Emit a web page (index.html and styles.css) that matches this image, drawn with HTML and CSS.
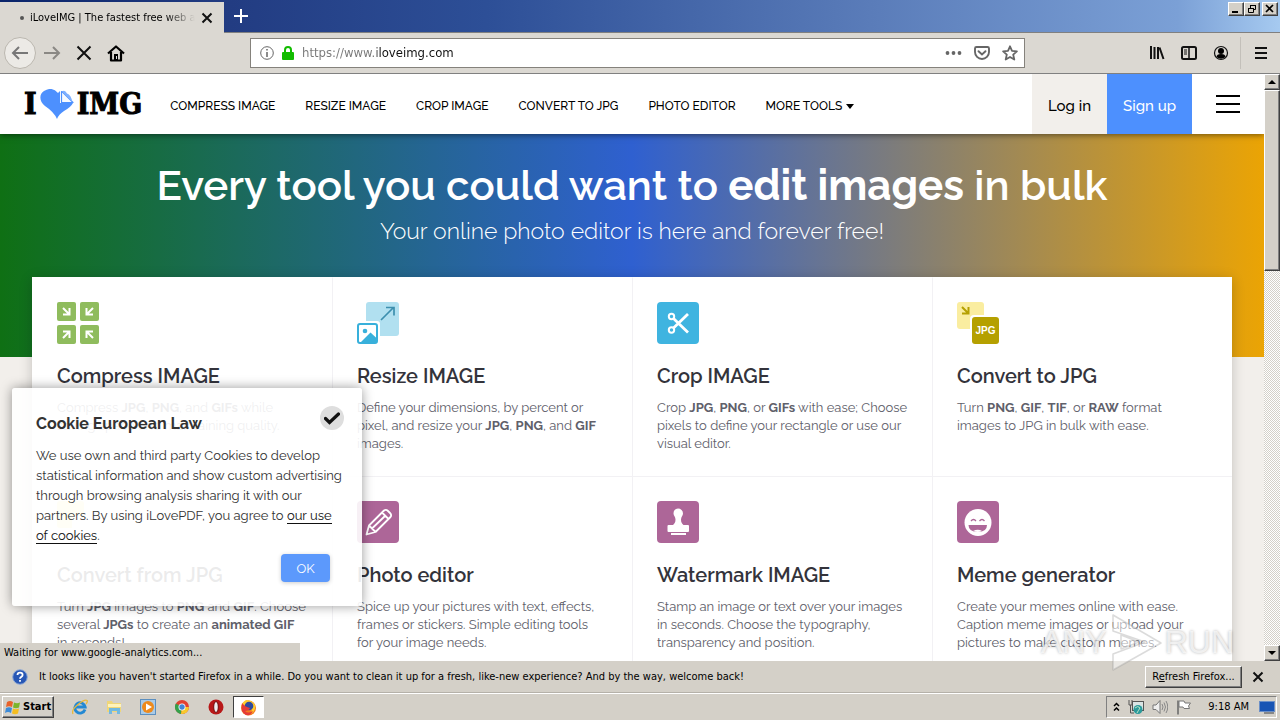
FILE: index.html
```html
<!DOCTYPE html>
<html lang="en">
<head>
<meta charset="utf-8">
<title>iLoveIMG | The fastest free web app</title>
<link rel="stylesheet" href="styles.css">
</head>
<body>
<div class="tabbar">
  <div class="tab"><span class="tab-dot"></span><span class="tab-title">iLoveIMG | The fastest free web app</span>
    <button class="icon-btn tab-close" aria-label="Close tab"><svg width="12" height="12" viewBox="0 0 12 12"><path d="M1.500 1.500l9 9M10.500 1.500l-9 9" stroke="#111" stroke-width="2"/></svg></button>
  </div>
  <button class="icon-btn new-tab" aria-label="New tab"><svg width="16" height="16" viewBox="0 0 16 16"><path d="M8 1v14M1 8h14" stroke="#fff" stroke-width="2"/></svg></button>
  <div class="window-buttons">
    <button class="win" aria-label="Minimize"><svg width="12" height="10" viewBox="0 0 12 10"><path d="M2 8h6" stroke="#000" stroke-width="2"/></svg></button>
    <button class="win" aria-label="Restore"><svg width="12" height="10" viewBox="0 0 12 10"><path d="M4.500 4V1.500h5v4H8M4 1.500h6M2.500 4.500h5v4h-5zM2 4.500h6" fill="none" stroke="#000"/></svg></button>
    <button class="win win-close" aria-label="Close"><svg width="12" height="10" viewBox="0 0 12 10"><path d="M2 1l7 7M9 1L2 8" stroke="#000" stroke-width="1.700"/></svg></button>
  </div>
</div>
<div class="toolbar">
  <button class="icon-btn back" aria-label="Back"><svg width="18" height="16" viewBox="0 0 18 16"><path d="M17 8H2M8 2L2 8l6 6" fill="none" stroke="#777" stroke-width="2"/></svg></button>
  <button class="icon-btn nav-btn" aria-label="Forward"><svg width="18" height="16" viewBox="0 0 18 16"><path d="M1 8h15M10 2l6 6-6 6" fill="none" stroke="#8a8884" stroke-width="2"/></svg></button>
  <button class="icon-btn nav-btn" aria-label="Stop"><svg width="16" height="16" viewBox="0 0 16 16"><path d="M1.500 1.500l13 13M14.500 1.500l-13 13" stroke="#111" stroke-width="2"/></svg></button>
  <button class="icon-btn nav-btn" aria-label="Home"><svg width="18" height="17" viewBox="0 0 18 17"><path d="M1 8.500L9 1.500l8 7M4 7v8.500h10V7" fill="none" stroke="#000" stroke-width="2.200" stroke-linejoin="round"/><path d="M7 9h4v7H7z"/><path d="M9.500 11v3" stroke="#ddd"/></svg></button>
  <div class="urlbar">
    <svg width="14" height="14" viewBox="0 0 14 14"><circle cx="7" cy="7" r="6.300" fill="none" stroke="#666"/><path d="M7 6v5M7 3v1.600" stroke="#666" stroke-width="1.500"/></svg>
    <svg width="12" height="14" viewBox="0 0 12 14"><path d="M3 7V4a3 3 0 0 1 6 0v3" fill="none" stroke="#12bc00" stroke-width="2"/><rect y="6" width="12" height="8" rx="1" fill="#12bc00"/></svg>
    <input class="url" type="text" value="https://www.iloveimg.com" aria-label="Address">
    <svg width="17" height="16" viewBox="0 0 17 16" fill="#666"><circle cx="2.500" cy="8" r="1.900"/><circle cx="8.500" cy="8" r="1.900"/><circle cx="14.500" cy="8" r="1.900"/></svg>
    <svg width="16" height="16" viewBox="0 0 16 16"><path d="M2.500 2h11q1.500 0 1.500 1.500V7a7 7 0 0 1-14 0V3.500Q1 2 2.500 2zM4.500 6.200L8 9.500l3.500-3.300" fill="none" stroke="#666" stroke-width="1.900" stroke-linecap="round"/></svg>
    <svg width="16" height="16" viewBox="0 0 16 16"><path d="M8 1.300l2 4.500 4.900.5-3.700 3.300 1.100 4.900L8 12l-4.300 2.500 1.100-4.900L1.100 6.300 6 5.800z" fill="none" stroke="#666" stroke-width="1.800" stroke-linejoin="round"/></svg>
  </div>
  <div class="tools-right">
    <svg width="16" height="16" viewBox="0 0 16 16"><path d="M2 1v13M5.500 2v12M9 2v12M10.500 2.500l4 11.500" stroke="#111" stroke-width="2"/></svg>
    <svg width="16" height="16" viewBox="0 0 16 16"><rect x="1" y="2" width="14" height="12" rx="1.500" fill="none" stroke="#111" stroke-width="2"/><path d="M8 2v12" stroke="#111" stroke-width="1.500"/><path d="M3 5h3M3 7h3M3 9h3" stroke="#111"/></svg>
    <svg width="16" height="16" viewBox="0 0 16 16"><circle cx="8" cy="8" r="6.500" fill="none" stroke="#111" stroke-width="1.200"/><circle cx="8" cy="6" r="3"/><path d="M3.500 12q0-3 4.500-3t4.500 3Q8 15.500 3.500 12z"/></svg>
    <button class="icon-btn app-menu" aria-label="Open menu"><svg width="12" height="12" viewBox="0 0 12 12"><path d="M0 1h12M0 6h12M0 11h12" stroke="#111" stroke-width="2"/></svg></button>
  </div>
</div>

<div class="viewport">
  <div class="page">
    <header class="header">
      <a class="logo" href="#" aria-label="I love IMG"><span>I</span>
        <svg width="34" height="31" viewBox="0 0 34 31"><path d="M17 30Q14 23 5 17C-1 12-1 5 4 2Q12-3 18 4L20 2l0 12 13 0Q31 18 24 22q-5 3-7 8z" fill="#4d90fe"/><path d="M21.500 2.500V13.500h11.500L22 2.500z" fill="#f7faff" stroke="#4d90fe" stroke-width="1.200" stroke-linejoin="round"/><path d="M22 2.500q3-2 5 2 4 1 5.500 9z" fill="#7fb0ff"/></svg>
        <span>IMG</span></a>
      <nav class="nav">
        <a href="#">COMPRESS IMAGE</a><a href="#">RESIZE IMAGE</a><a href="#">CROP IMAGE</a><a href="#">CONVERT TO JPG</a><a href="#">PHOTO EDITOR</a>
        <a class="more" href="#">MORE TOOLS<svg width="8" height="5" viewBox="0 0 8 5"><path d="M0 0h8L4 5z"/></svg></a>
      </nav>
      <a class="login" href="#">Log in</a>
      <a class="signup" href="#">Sign up</a>
      <button class="icon-btn burger" aria-label="Menu"><svg width="24" height="18" viewBox="0 0 24 18"><path d="M0 1h24M0 9h24M0 17h24" stroke="#000" stroke-width="2"/></svg></button>
    </header>
    <section class="hero">
      <h1>Every tool you could want to <b>edit images</b> in bulk</h1>
      <h2>Your online photo editor is here and forever free!</h2>
    </section>
    <main class="grid">
      <a class="card" href="#">
        <svg width="42" height="42" viewBox="0 0 42 42"><g fill="#8fbc5d"><rect width="19" height="19" rx="2"/><rect x="23" width="19" height="19" rx="2"/><rect y="23" width="19" height="19" rx="2"/><rect x="23" y="23" width="19" height="19" rx="2"/></g><path d="M6 6l6 6M12.500 6v6.500H6M36 6l-6 6M29.500 6v6.500H36M6 36l6-6M6 29.500h6.500V36M36 36l-6-6M36 29.500h-6.500V36" fill="none" stroke="#fff" stroke-width="2"/></svg>
        <h3>Compress IMAGE</h3><p>Compress <b>JPG</b>, <b>PNG</b>, and <b>GIFs</b> while<br>saving space and maintaining quality.</p></a>
      <a class="card" href="#">
        <svg width="42" height="42" viewBox="0 0 42 42"><rect x="9" width="33" height="34" rx="3" fill="#b1e0f0"/><path d="M24 18L36 6M29 5.500h8v8" fill="none" stroke="#3d8fae" stroke-width="1.700"/><rect x="-2" y="19" width="25" height="25" rx="3" fill="#fff"/><rect x="1" y="22" width="19" height="19" rx="2" fill="#fff" stroke="#38b0db" stroke-width="2"/><circle cx="8" cy="29" r="2.300" fill="#38b0db"/><path d="M3 41l10.500-10.500L20 36.500V41z" fill="#38b0db"/></svg>
        <h3>Resize IMAGE</h3><p>Define your dimensions, by percent or<br>pixel, and resize your <b>JPG</b>, <b>PNG</b>, and <b>GIF</b><br>images.</p></a>
      <a class="card" href="#">
        <svg width="42" height="42" viewBox="0 0 42 42"><rect width="42" height="42" rx="4" fill="#3fb4e0"/><g fill="none" stroke="#fff"><circle cx="14.500" cy="14.500" r="2.700" stroke-width="2"/><circle cx="14.500" cy="28" r="2.700" stroke-width="2"/><path d="M16.500 16.500L31 30.500M16.500 26L31 12" stroke-width="2.800"/></g></svg>
        <h3>Crop IMAGE</h3><p>Crop <b>JPG</b>, <b>PNG</b>, or <b>GIFs</b> with ease; Choose<br>pixels to define your rectangle or use our<br>visual editor.</p></a>
      <a class="card" href="#">
        <svg width="42" height="42" viewBox="0 0 42 42"><rect width="27" height="27" rx="3" fill="#faeda0"/><path d="M5 5l6 6M11.500 5v6.500H5" fill="none" stroke="#b5a000" stroke-width="2"/><rect x="13" y="13" width="31" height="31" rx="4" fill="#fff"/><rect x="15" y="15" width="27" height="27" rx="3" fill="#b5a000"/><text x="28.500" y="32" class="jpg">JPG</text></svg>
        <h3>Convert to JPG</h3><p>Turn <b>PNG</b>, <b>GIF</b>, <b>TIF</b>, or <b>RAW</b> format<br>images to JPG in bulk with ease.</p></a>
      <a class="card" href="#">
        <svg width="42" height="42" viewBox="0 0 42 42"><rect width="27" height="27" rx="3" fill="#faeda0"/><rect x="15" y="15" width="27" height="27" rx="3" fill="#fff"/></svg>
        <h3>Convert from JPG</h3><p>Turn <b>JPG</b> images to <b>PNG</b> and <b>GIF</b>. Choose<br>several <b>JPGs</b> to create an <b>animated GIF</b><br>in seconds!</p></a>
      <a class="card" href="#">
        <svg width="42" height="42" viewBox="0 0 42 42"><rect width="42" height="42" rx="4" fill="#ad6698"/><path d="M9.500 33.500l2.500-9L27 9.500q2-1.500 4 .5l2 2q2 2 .5 4L18.500 31zM12 24.500l6.500 6.500M25 11.500l6.500 6.500M15 27.500L28.500 14.500" fill="none" stroke="#fff" stroke-width="1.800" stroke-linejoin="round"/></svg>
        <h3>Photo editor</h3><p>Spice up your pictures with text, effects,<br>frames or stickers. Simple editing tools<br>for your image needs.</p></a>
      <a class="card" href="#">
        <svg width="42" height="42" viewBox="0 0 42 42"><rect width="42" height="42" rx="4" fill="#ad6698"/><path d="M21 7.500a5 5 0 0 1 5 5c0 2-2 3.500-2 6 0 3 1 4 2.500 5.500H31q1 0 1 1v5q0 1-1 1H11.500q-1 0-1-1v-5q0-1 1-1h4.500C17.500 22.500 18.500 21.500 18.500 18.500c0-2.500-2-4-2-6a5 5 0 0 1 4.500-5zM14 32h15v2H14z" fill="#fff"/></svg>
        <h3>Watermark IMAGE</h3><p>Stamp an image or text over your images<br>in seconds. Choose the typography,<br>transparency and position.</p></a>
      <a class="card" href="#">
        <svg width="42" height="42" viewBox="0 0 42 42"><rect width="42" height="42" rx="4" fill="#ad6698"/><circle cx="21" cy="21.500" r="13.500" fill="#fff"/><path d="M14 20q2.500-3 5 0M22.500 20q2.500-3 5 0" fill="none" stroke="#ad6698" stroke-width="1.300"/><path d="M11.500 24h18.500q0 7-9.200 7t-9.300-7z" fill="#ad6698"/><path d="M16 30q5-2.500 9 0-4 1.800-9 0z" fill="#fff"/></svg>
        <h3>Meme generator</h3><p>Create your memes online with ease.<br>Caption meme images or upload your<br>pictures to make custom memes.</p></a>
    </main>
  </div>
  <div class="scrollbar"><button class="sb-btn" aria-label="Scroll up"><svg width="8" height="4" viewBox="0 0 8 4"><path d="M0 4h8L4 0z"/></svg></button><div class="thumb"></div><button class="sb-btn sb-down" aria-label="Scroll down"><svg width="8" height="4" viewBox="0 0 8 4"><path d="M0 0h8L4 4z"/></svg></button></div>
  <aside class="cookie">
    <div class="cookie-head"><strong>Cookie European Law</strong><button class="icon-btn cookie-check" aria-label="Accept"><svg width="16" height="13" viewBox="0 0 16 13"><path d="M1.500 6.500l4 4L14.500 2" fill="none" stroke="#111" stroke-width="3.200" stroke-linecap="round"/></svg></button></div>
    <p>We use own and third party Cookies to develop<br>statistical information and show custom advertising<br>through browsing analysis sharing it with our<br>partners. By using iLovePDF, you agree to <a href="#">our use<br>of cookies</a>.</p>
    <button class="ok">OK</button>
  </aside>
  <div class="status">Waiting for www.google-analytics.com...</div>
  <div class="watermark"><span>ANY</span><svg width="58" height="62" viewBox="0 0 58 62"><path d="M6 4v16l32 11-32 12v16l48-27zM14 24v14l18-7z" fill="#fff" fill-opacity=".5" stroke="#999" stroke-opacity=".35" stroke-width="1.500" stroke-linejoin="round"/></svg><span>RUN</span></div>
</div>

<div class="notice">
  <svg width="16" height="16" viewBox="0 0 16 16"><circle cx="8" cy="8" r="7.300" fill="#2857b5" stroke="#8ea9d6"/><path d="M5.500 6q0-2.300 2.600-2.300T10.600 6q0 1.200-1.300 1.900T8 9.700M8 11v1.800" fill="none" stroke="#fff" stroke-width="1.800"/></svg>
  <span class="notice-text">It looks like you haven't started Firefox in a while. Do you want to clean it up for a fresh, like-new experience? And by the way, welcome back!</span>
  <button class="refresh">R<u>e</u>fresh Firefox...</button>
  <button class="icon-btn" aria-label="Dismiss"><svg width="12" height="12" viewBox="0 0 12 12"><path d="M1.500 1.500l9 9M10.500 1.500l-9 9" stroke="#111" stroke-width="2"/></svg></button>
</div>
<div class="taskbar">
  <button class="start"><svg width="16" height="15" viewBox="0 0 16 15"><path d="M2 2q3-2 6 0L7 7Q4 5.500 1 7z" fill="#e8622a"/><path d="M9 2.500q3 1.500 6 0L14 7.500q-3 1.500-6 0z" fill="#7bb52c"/><path d="M1 8q3-1.500 6 0l-1 5q-3-2-6 0z" fill="#3c8bd8"/><path d="M8 8.500q3 1.500 6 0L13 13.500q-3 1.500-6 0z" fill="#f4bd20"/></svg>Start</button>
  <div class="launch">
    <svg width="16" height="16" viewBox="0 0 16 16"><path d="M13 10.500A5.200 5.200 0 1 1 13.200 8H3.500" fill="none" stroke="#2489d3" stroke-width="2.800"/><path d="M1 15Q-1 11 6 5.500T15 1.500q1 1-1 3.500" fill="none" stroke="#e9b93a" stroke-width="1.300"/></svg>
    <svg width="16" height="16" viewBox="0 0 16 16"><path d="M1 2h5l1 2h8v9H1z" fill="#efd679"/><path d="M2 5h13v3H2z" fill="#fff3ba"/><path d="M3 15V9h11v6h-3v-3H6v3z" fill="#72b9e0"/></svg>
    <svg width="16" height="16" viewBox="0 0 16 16"><rect x=".5" y=".5" width="15" height="15" fill="#aacbe7" stroke="#5c8fbf"/><circle cx="8" cy="8" r="6" fill="#ee8a1c"/><path d="M6 4.500v7L12 8z" fill="#fff"/></svg>
    <svg width="16" height="16" viewBox="0 0 16 16"><circle cx="8" cy="8" r="7" fill="#e24132"/><path d="M8 8L1.900 4.500A7 7 0 0 0 7 15z" fill="#34a14b"/><path d="M8 8h7A7 7 0 0 1 7 15z" fill="#f8c92c"/><circle cx="8" cy="8" r="3.500" fill="#fff"/><circle cx="8" cy="8" r="2.700" fill="#4285d8"/></svg>
    <svg width="16" height="16" viewBox="0 0 16 16"><ellipse cx="8" cy="8" rx="7.500" ry="7.500" fill="#b81818"/><ellipse cx="8" cy="8" rx="2.300" ry="5.500" fill="#eee" stroke="#6f0808"/></svg>
  </div>
  <button class="running" aria-label="Firefox"><svg width="17" height="17" viewBox="0 0 17 17"><circle cx="8.500" cy="9" r="7.500" fill="#f47a1e"/><path d="M1 8q1-5 5-7 6 0 9 5 1 6-4 9 2-5-1-8z" fill="#ffcc2c"/><circle cx="9" cy="7" r="4.300" fill="#304b9d"/><path d="M2 4q3 4 8 5-1 3-5 3 3 3 8 0-2 5-7 4Q0 13 2 4z" fill="#e43b37"/></svg></button>
  <div class="tray">
    <svg width="7" height="10" viewBox="0 0 7 10"><path d="M1 4l2.500-2.500L6 4M1 8.500L3.500 6 6 8.500" fill="none" stroke="#000" stroke-width="1.500"/></svg>
    <svg width="16" height="16" viewBox="0 0 16 16"><rect x="4.500" y="2.500" width="11" height="9" fill="#d9e4e4" stroke="#555"/><path d="M1 1v5h3V1M2.500 6v8H6" fill="none" stroke="#555"/><circle cx="10" cy="10.500" r="4.500" fill="#2b9a9b"/><path d="M7 9q3-3 5 0-2 3-3 5" fill="none" stroke="#b9e6c8"/></svg>
    <svg width="16" height="16" viewBox="0 0 16 16"><path d="M1 6h3l4-4.500v13L4 10.500H1z" fill="#eee" stroke="#777"/><path d="M10 5q2 3 0 6M12 3.500q3 4.500 0 9M14 2q3.500 6 0 12" fill="none" stroke="#888"/></svg>
    <svg width="16" height="16" viewBox="0 0 16 16"><path d="M2 1.500v14" stroke="#666" stroke-width="1.500"/><path d="M3 2h5l1 2h5.500l-2 3 1 2.500H8L7 8H3z" fill="#fff" stroke="#777"/></svg>
    <time>9:18 AM</time>
    <svg width="16" height="13" viewBox="0 0 16 13"><rect x=".5" y=".5" width="15" height="10" fill="#1854b4" stroke="#6b8fc7"/><path d="M5 12h10" stroke="#888" stroke-width="2"/></svg>
  </div>
</div>
</body>
</html>
```

FILE: styles.css
```css
* { box-sizing: border-box; }
body { margin: 0; height: 100vh; display: flex; flex-direction: column; overflow: hidden; background: #d4d0c8; color: #000; font: 11px/14px Tahoma, "DejaVu Sans Condensed", sans-serif; }
a { color: inherit; text-decoration: none; }
button { font: inherit; color: inherit; }
svg { display: block; flex: none; }
h1, h2, h3, p { margin: 0; }
.icon-btn { display: flex; align-items: center; justify-content: center; padding: 0; border: 0; background: none; }

.tabbar { display: flex; flex: none; height: 33px; background: linear-gradient(90deg, #0a246a, #223c82 18%, #2d4f97 38%, #5a7cb9 68%, #7ba0d6 92%, #a6caf0); border-bottom: 1px solid #808080; }
.tab { display: flex; align-items: center; width: 224px; height: 31px; margin-top: 2px; padding: 0 11px 0 20px; background: #dbd8d2; }
.tab-dot { width: 4px; height: 4px; margin-right: 6px; border-radius: 50%; background: #555; }
.tab-title { flex: 1; overflow: hidden; white-space: nowrap; mask-image: linear-gradient(90deg, #000 82%, transparent); }
.tab-close { margin-left: 6px; }
.new-tab { width: 34px; }
.window-buttons { display: flex; margin-left: auto; padding: 2px 2px 0 0; }
.win { display: grid; place-items: center; width: 16px; height: 14px; padding: 0; }
.win-close { margin-left: 2px; }
.win, .sb-btn, .thumb, .refresh, .start { background: #d4d0c8; border: 1px solid; border-color: #fff #404040 #404040 #fff; box-shadow: inset -1px -1px #808080; }

.toolbar { display: flex; align-items: center; flex: none; height: 41px; padding: 0 13px 0 4px; background: #dbd8d2; border-bottom: 1px solid #808080; }
.back { width: 32px; height: 32px; border: 1px solid #bbb7af; border-radius: 50%; background: #eceae6; }
.nav-btn { width: 32px; height: 32px; }
.urlbar { display: flex; align-items: center; flex: 0 1 775px; gap: 12px; height: 30px; margin-left: 118px; padding: 0 6px 0 9px; background: #fff; border: 1px solid #85827c; }
.urlbar svg + svg { margin-left: -4px; }
.urlbar .url + svg, .urlbar .url + svg ~ svg { margin-left: 0; }
.url { flex: 1; min-width: 0; padding: 0; margin-left: -4px; border: 0; outline: 0; font: 13px/18px Tahoma, "DejaVu Sans Condensed", sans-serif; color: transparent; background: linear-gradient(90deg, #777 75px, #111 75px); background-clip: text; }
.tools-right { display: flex; align-items: center; gap: 16px; margin-left: auto; }
.app-menu { height: 32px; margin-left: -5px; padding-left: 14px; border-left: 1px solid #c3c0ba; }

.viewport { position: relative; z-index: 1; display: flex; flex: 1; min-height: 0; }
.page { flex: 1; min-width: 0; overflow: hidden; background: #f2efeb; font-family: Raleway, Lato, sans-serif; }
.header { position: relative; display: flex; align-items: stretch; height: 60px; padding-left: 24px; background: #fff; box-shadow: 0 1px 6px rgba(0, 0, 0, .5); }
.logo { display: flex; align-items: center; gap: 3px; font: bold 30px/60px "DejaVu Serif Condensed", "DejaVu Serif", serif; -webkit-text-stroke: 1px #000; }
.nav { display: flex; align-items: center; gap: 30px; margin: 4px auto 0 28px; font-size: 12px; font-weight: 500; white-space: nowrap; }
.more { display: flex; align-items: center; gap: 4px; }
.login, .signup { display: grid; place-items: center; padding: 4px 16px 0; font-size: 15px; font-weight: 500; white-space: nowrap; }
.login { background: #f2efeb; }
.signup { background: #4d90fe; color: #fff; }
.burger { width: 72px; }
.hero { height: 223px; padding-top: 24px; color: #fff; text-align: center; white-space: nowrap; background: linear-gradient(90deg, #0f7014, #2f60d0 50%, #eba404); }
.hero h1 { font-size: 42px; line-height: 56px; font-weight: 600; }
.hero h1 b { font-weight: 700; }
.hero h2 { margin-top: 3px; font-size: 23px; line-height: 28px; font-weight: 300; }
.grid { position: relative; display: grid; grid-template-columns: repeat(4, minmax(0, 1fr)); grid-auto-rows: 199px; margin: -80px 32px 0; background: #fff; box-shadow: 0 2px 12px rgba(0, 0, 0, .2); }
.card { padding: 24px; border-left: 1px solid #f2f1f4; border-top: 1px solid #f2f1f4; white-space: nowrap; }
.card:nth-child(-n+4) { border-top-color: transparent; }
.card:nth-child(4n+1) { border-left-color: transparent; }
.card h3 { margin: 20px 0 11px; font-size: 20px; line-height: 24px; font-weight: 600; color: #33333b; }
.card p { font-size: 13px; line-height: 18px; color: #60606a; }
.jpg { font: bold 10px "Liberation Sans", sans-serif; fill: #fff; text-anchor: middle; }

.scrollbar { display: flex; flex-direction: column; flex: none; width: 16px; background: repeating-conic-gradient(#fff 0 25%, #d4d0c8 0 50%) 0 0 / 2px 2px; }
.sb-btn { display: grid; place-items: center; height: 16px; padding: 0; }
.thumb { height: 181px; }
.sb-down { margin-top: auto; }

.cookie { position: absolute; left: 12px; bottom: 55px; width: 350px; padding: 18px 18px 24px 24px; border-radius: 3px; background: rgba(255, 255, 255, .9); box-shadow: 0 0 12px rgba(0, 0, 0, .4); font-family: Raleway, Lato, sans-serif; font-size: 13px; color: #333; white-space: nowrap; }
.cookie-head { display: flex; justify-content: space-between; height: 40px; font-size: 16px; line-height: 36px; }
.cookie-check { width: 24px; height: 24px; border-radius: 50%; background: #dedede; }
.cookie p { line-height: 20px; }
.cookie p a { color: #111; border-bottom: 1px solid #111; }
.ok { display: block; width: 49px; height: 28px; margin: 8px 14px 0 auto; padding: 2px 0 0; border: 0; border-radius: 4px; background: #5c99fc; color: #fff; box-shadow: 0 1px 4px rgba(0, 0, 0, .2); }
.status { position: absolute; left: 0; bottom: 0; width: 300px; height: 18px; padding: 3px 4px; background: #d4d0c8; }
.watermark { position: absolute; right: 46px; bottom: -12px; display: flex; align-items: center; font: 32px/62px "Liberation Sans", sans-serif; color: rgba(255, 255, 255, .7); text-shadow: 0 0 3px rgba(0, 0, 0, .3); pointer-events: none; }

.notice { display: flex; align-items: center; flex: none; height: 32px; padding: 0 16px 0 12px; border-bottom: 1px solid #b5b1a9; }
.notice-text { flex: 1; margin-left: 11px; white-space: nowrap; }
.refresh { width: 97px; height: 22px; margin-right: 10px; padding: 0; white-space: nowrap; }
.taskbar { display: flex; align-items: center; flex: none; height: 27px; padding: 0 3px 0 2px; border-top: 1px solid #fff; }
.start { display: flex; align-items: center; gap: 2px; width: 52px; height: 22px; padding: 0 2px; font-weight: bold; }
.launch { display: flex; gap: 18px; margin-left: 18px; }
.running { display: grid; place-items: center; width: 31px; height: 22px; margin-left: 9px; padding: 0; background: #fff; border: 1px solid; border-color: #404040 #fff #fff #404040; }
.tray { display: flex; align-items: center; gap: 8px; height: 22px; margin-left: auto; padding: 0 1px 0 6px; border: 1px solid; border-color: #808080 #fff #fff #808080; }
.tray time { margin: 0 2px 0 8px; }
```
